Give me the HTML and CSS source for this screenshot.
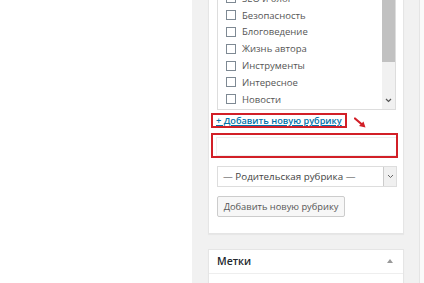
FILE: index.html
```html
<!DOCTYPE html>
<html lang="ru">
<head>
<meta charset="utf-8">
<link rel="stylesheet" href="styles.css">
</head>
<body>
<div class="page">
  <div class="blank"></div>
  <div class="sidebar">
    <div class="postbox cats">
      <div class="checklist">
        <ul class="items">
          <li><span class="cb"></span>SEO и блог</li>
          <li><span class="cb"></span>Безопасность</li>
          <li><span class="cb"></span>Блоговедение</li>
          <li><span class="cb"></span>Жизнь автора</li>
          <li><span class="cb"></span>Инструменты</li>
          <li><span class="cb"></span>Интересное</li>
          <li><span class="cb"></span>Новости</li>
        </ul>
        <div class="scroll">
          <div class="thumb"></div>
          <svg class="down" width="7" height="5" viewBox="0 0 7 5"><path d="M1 1 L3.5 3.5 L6 1" fill="none" stroke="#555" stroke-width="1.2"/></svg>
        </div>
      </div>
      <div class="add-row">
        <div class="hl-link"><a class="add-link" href="#">+ Добавить новую рубрику</a></div>
        <svg class="red-arrow" width="13" height="12" viewBox="0 0 13 12"><path d="M1 1.5 L8 7.5" stroke="#d21f27" stroke-width="2.2" stroke-linecap="round"/><path d="M11.5 10.5 L5 9 L9.5 4.5 Z" fill="#d21f27"/></svg>
      </div>
      <div class="hl-input"><div class="new-input"></div></div>
      <div class="select">
        <span class="sel-text">— Родительская рубрика —</span>
        <span class="sel-arrow"><svg width="7" height="5" viewBox="0 0 7 5"><path d="M1 1 L3.5 3.5 L6 1" fill="none" stroke="#666" stroke-width="1"/></svg></span>
      </div>
      <button class="btn" type="button">Добавить новую рубрику</button>
    </div>
    <div class="postbox tags">
      <div class="hndle">
        <h2 class="title">Метки</h2>
        <span class="toggle"></span>
      </div>
    </div>
  </div>
  <div class="edge"></div>
</div>
</body>
</html>
```
FILE: styles.css
```css
*, *::before, *::after {
  box-sizing: border-box;
}
html, body {
  margin: 0;
  padding: 0;
  background: #fff;
  font-family: "Open Sans", "Noto Sans", sans-serif;
  overflow: hidden;
}
.page {
  display: flex;
  width: 424px;
  height: 283px;
  overflow: hidden;
}
.blank {
  width: 192px;
  flex: none;
  background: #fff;
}
.sidebar {
  width: 227px;
  flex: none;
  background: #f1f1f1;
  padding: 0 15px 0 16px;
}
.edge {
  flex: 1;
  border-left: 1px solid #e4e4e4;
  background: #fafafa;
}
.postbox {
  background: #fff;
  border: 1px solid #e5e5e5;
  box-shadow: 0 1px 1px rgba(0,0,0,0.04);
}
.cats {
  margin-top: -20px;
  padding: 8px 7px 16px 8px;
}
.checklist {
  display: flex;
  border: 1px solid #dddddd;
  height: 121px;
  background: #fff;
}
.items {
  list-style: none;
  margin: 0;
  padding: 0 0 0 8px;
  flex: 1;
}
.items li {
  height: 16.8px;
  display: flex;
  align-items: center;
  font-size: 9.5px;
  color: #555;
}
.cb {
  width: 10px;
  height: 10px;
  border: 1px solid #7e8993;
  background: #fff;
  margin-right: 6px;
  flex: none;
}
.scroll {
  width: 13px;
  flex: none;
  background: #f1f1f1;
  display: flex;
  flex-direction: column;
  align-items: center;
}
.thumb {
  width: 13px;
  height: 72px;
  background: #c1c1c1;
}
.down {
  margin-top: auto;
  margin-bottom: 6px;
}
.add-row {
  display: flex;
  align-items: flex-start;
  margin-top: 3px;
  gap: 7px;
}
.hl-link {
  border: 2px solid #d21f27;
  padding: 0 3px;
  margin-left: -6px;
  width: 136px;
  height: 15px;
  display: flex;
  align-items: center;
}
.add-link {
  font-size: 9.2px;
  font-weight: 600;
  color: #0073aa;
  text-decoration: underline;
  line-height: 11px;
  white-space: nowrap;
}
.red-arrow {
  margin-top: 4px;
  flex: none;
}
.hl-input {
  margin: 4px 0 0 -6px;
  width: 187px;
  height: 25px;
  border: 2px solid #d21f27;
  padding: 2px 0 2px 3px;
}
.new-input {
  height: 19px;
  border: 1px solid #eee;
  border-right: none;
  background: #fff;
}
.select {
  margin-top: 8px;
  width: 180px;
  height: 21px;
  border: 1px solid #ddd;
  display: flex;
  align-items: center;
  background: #fff;
}
.sel-text {
  flex: 1;
  padding-left: 5px;
  font-size: 9.8px;
  color: #444;
}
.sel-arrow {
  width: 13px;
  height: 19px;
  border-left: 1px solid #ccc;
  background: #f0f0f0;
  display: flex;
  align-items: center;
  justify-content: center;
}
.btn {
  display: block;
  margin-top: 9px;
  width: 128px;
  height: 21px;
  border: 1px solid #ccc;
  border-radius: 2px;
  background: #f7f7f7;
  color: #555;
  font-family: "Open Sans", "Noto Sans", sans-serif;
  font-size: 9.3px;
  padding: 0;
}
.tags {
  margin-top: 15px;
  height: 60px;
}
.hndle {
  display: flex;
  align-items: center;
  justify-content: space-between;
  height: 24px;
  border-bottom: 1px solid #eee;
  padding: 0 10px 2px 8px;
}
.title {
  margin: 0;
  font-size: 10.5px;
  font-weight: 600;
  color: #23282d;
}
.toggle {
  width: 0;
  height: 0;
  border-left: 3.5px solid transparent;
  border-right: 3.5px solid transparent;
  border-bottom: 4px solid #999;
}
```
